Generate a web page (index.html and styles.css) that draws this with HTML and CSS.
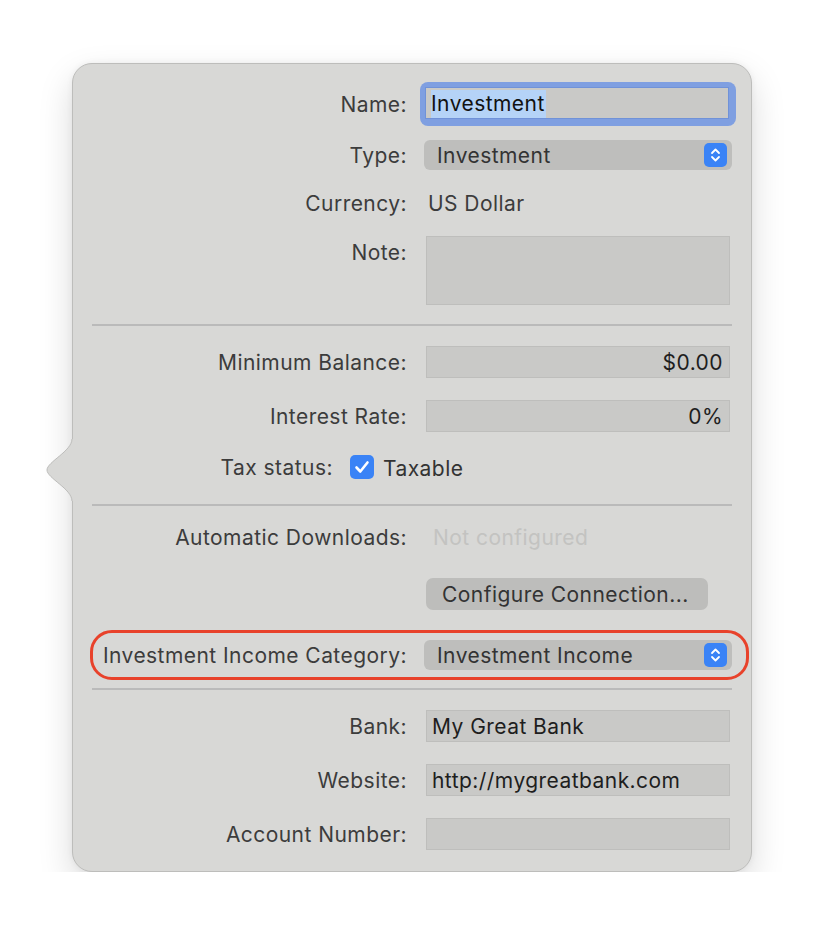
FILE: index.html
```html
<!DOCTYPE html>
<html>
<head>
<meta charset="utf-8">
<link rel="stylesheet" href="styles.css">
</head>
<body>
<div class="popover">
  <svg class="arrow" width="28" height="62" viewBox="0 0 28 62">
    <path d="M27,0 L26,0 C26,12 1,23 1,31 C1,39 26,50 26,62 L27,62 Z" fill="#d8d8d6"/>
    <path d="M26,0 C26,12 1,23 1,31 C1,39 26,50 26,62" fill="none" stroke="#bdbdbb" stroke-width="1"/>
  </svg>

  <div class="row h44">
    <div class="label">Name:</div>
    <div class="ring"><div class="field"><span class="sel">Investment</span></div></div>
  </div>

  <div class="row h30 mt14">
    <div class="label">Type:</div>
    <div class="popup"><span class="ptext">Investment</span><span class="stepper"><svg width="23" height="24" viewBox="0 0 23 24"><path d="M8,10 L11.5,6.5 L15,10 M8,14 L11.5,17.5 L15,14" fill="none" stroke="#fff" stroke-width="1.8" stroke-linecap="round" stroke-linejoin="round"/></svg></span></div>
  </div>

  <div class="row h28 mt18">
    <div class="label">Currency:</div>
    <div class="value">US Dollar</div>
  </div>

  <div class="row row-top mt20">
    <div class="label note-label">Note:</div>
    <div class="field note"></div>
  </div>

  <div class="sep mt19"></div>

  <div class="row h32 mt20">
    <div class="label">Minimum Balance:</div>
    <div class="field num">$0.00</div>
  </div>

  <div class="row h32 mt22">
    <div class="label">Interest Rate:</div>
    <div class="field num">0%</div>
  </div>

  <div class="tax mt23">
    <div class="label tax-label">Tax status:</div>
    <span class="check"><svg width="24" height="24" viewBox="0 0 24 24"><path d="M6.5,12.5 L10.3,16.5 L17.5,7.5" fill="none" stroke="#fff" stroke-width="2.6" stroke-linecap="round" stroke-linejoin="round"/></svg></span>
    <span class="taxable">Taxable</span>
  </div>

  <div class="sep mt25"></div>

  <div class="row h28 mt16">
    <div class="label">Automatic Downloads:</div>
    <div class="value muted">Not configured</div>
  </div>

  <div class="row h32 mt28">
    <div></div>
    <div class="button">Configure Connection...</div>
  </div>

  <div class="row h50 mt20 highlight">
    <div class="label">Investment Income Category:</div>
    <div class="popup"><span class="ptext">Investment Income</span><span class="stepper"><svg width="23" height="24" viewBox="0 0 23 24"><path d="M8,10 L11.5,6.5 L15,10 M8,14 L11.5,17.5 L15,14" fill="none" stroke="#fff" stroke-width="1.8" stroke-linecap="round" stroke-linejoin="round"/></svg></span></div>
  </div>

  <div class="sep mt8"></div>

  <div class="row h32 mt20">
    <div class="label">Bank:</div>
    <div class="field text">My Great Bank</div>
  </div>

  <div class="row h32 mt22">
    <div class="label">Website:</div>
    <div class="field text">http://mygreatbank.com</div>
  </div>

  <div class="row h32 mt22">
    <div class="label">Account Number:</div>
    <div class="field text"></div>
  </div>
</div>
</body>
</html>
```

FILE: styles.css
```css
* { box-sizing: border-box; }
html, body { margin: 0; padding: 0; background: #ffffff; }
body {
  padding: 63px 0 0 72px;
  font-family: "Inter", "Noto Sans", sans-serif;
  font-size: 21px;
  letter-spacing: 0.45px;
  color: #3c3c3c;
}
.popover {
  position: relative;
  width: 680px;
  height: 809px;
  background: #d8d8d6;
  border: 1px solid #bdbdbb;
  border-radius: 20px;
  padding: 18px 19px 0 19px;
  box-shadow: 0 14px 34px rgba(0,0,0,0.15), 0 0 6px rgba(0,0,0,0.06);
}
.arrow {
  position: absolute;
  left: -27px;
  top: 375px;
}
.row {
  position: relative;
  display: grid;
  grid-template-columns: 315px 306px;
  column-gap: 19px;
  align-items: center;
}
.row-top { align-items: start; }
.h44 { height: 44px; }
.h30 { height: 30px; }
.h28 { height: 28px; }
.h32 { height: 32px; }
.h50 { height: 50px; }
.mt8 { margin-top: 8px; }
.mt14 { margin-top: 14px; }
.mt16 { margin-top: 16px; }
.mt18 { margin-top: 18px; }
.mt19 { margin-top: 19px; }
.mt20 { margin-top: 20px; }
.mt22 { margin-top: 22px; }
.mt23 { margin-top: 23px; }
.mt25 { margin-top: 25px; }
.mt28 { margin-top: 28px; }
.label {
  text-align: right;
  white-space: nowrap;
  line-height: 28px;
  padding-top: 2px;
  color: #3c3c3c;
}
.note-label { padding-top: 3px; }
.ring {
  margin-left: -6px;
  width: 316px;
  height: 44px;
  padding: 5px;
  border-radius: 8px;
  background: #7f9fe1;
}
.ring .field {
  width: 304px;
  border-color: #7092d8;
  padding-left: 5px;
  padding-top: 1px;
  color: #111;
}
.sel {
  background: #b5d3f7;
  display: inline-block;
  line-height: 28px;
  padding-right: 1px;
}
.field {
  width: 304px;
  height: 32px;
  background: #c9c9c7;
  border: 1px solid #bebebc;
  line-height: 30px;
  padding-top: 1px;
  color: #1e1e1e;
  white-space: nowrap;
}
.field.num { text-align: right; padding-right: 6px; }
.field.text { padding-left: 5px; }
.field.note { height: 69px; }
.popup {
  margin-left: -2px;
  width: 308px;
  height: 30px;
  border-radius: 6px;
  background: #bebebc;
  display: flex;
  align-items: center;
  justify-content: space-between;
  padding: 0 5px 0 13px;
  color: #333;
}
.ptext { padding-top: 1px; }
.stepper {
  width: 23px;
  height: 24px;
  border-radius: 5px;
  background: #3a83f6;
  display: flex;
}
.value { margin-left: 2px; padding-top: 1px; color: #3c3c3c; }
.value.muted { margin-left: 7px; color: #c3c3c1; }
.sep {
  height: 2px;
  background: #bababa;
  width: 640px;
}
.tax {
  display: flex;
  align-items: center;
  height: 24px;
}
.tax-label { width: 241px; }
.check {
  margin-left: 17px;
  width: 24px;
  height: 24px;
  border-radius: 5px;
  background: #3a83f6;
  display: flex;
}
.taxable { margin-left: 9px; padding-top: 2px; color: #333; }
.button {
  width: 282px;
  height: 32px;
  border-radius: 7px;
  background: #bdbdbb;
  padding-left: 16px;
  line-height: 32px;
  padding-top: 1px;
  color: #333;
  white-space: nowrap;
}
.highlight::after {
  content: "";
  position: absolute;
  top: 0;
  bottom: 0;
  left: -2px;
  right: -17px;
  border: 3px solid #e8422b;
  border-radius: 22px;
  pointer-events: none;
}
```
